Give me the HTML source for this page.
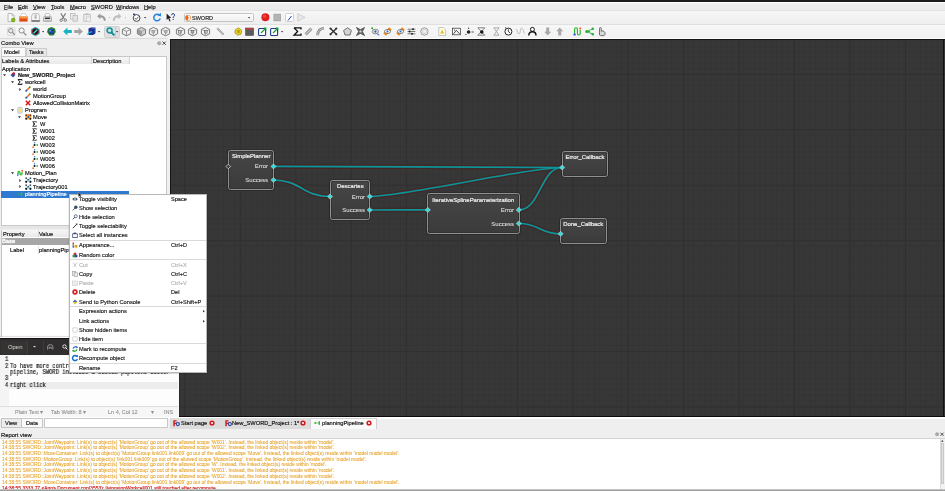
<!DOCTYPE html>
<html><head><meta charset="utf-8"><style>
*{margin:0;padding:0;box-sizing:border-box}
html,body{width:945px;height:491px;overflow:hidden;background:#efefef;font-family:"Liberation Sans",sans-serif;color:#111}
.t{-webkit-text-stroke:0.16px currentColor}
u{text-decoration-thickness:0.45px;text-underline-offset:0.1px;text-decoration-color:#555}
.a{position:absolute}
.t{position:absolute;white-space:nowrap;will-change:transform}
svg{position:absolute;overflow:visible}
</style></head><body>
<div class="a" style="left:0px;top:0px;width:945px;height:2px;background:#1c1c1c"></div>
<div class="a" style="left:0px;top:2px;width:945px;height:9px;background:linear-gradient(#fdfdfd 0,#fdfdfd 1.2px,#ededed 1.6px,#ebebeb 7.5px,#e4e4e4 8.5px)"></div>
<div class="t" style="left:4px;top:3.00px;font-size:5.7px;line-height:8px;"><u>F</u>ile</div>
<div class="t" style="left:18px;top:3.00px;font-size:5.7px;line-height:8px;"><u>E</u>dit</div>
<div class="t" style="left:33px;top:3.00px;font-size:5.7px;line-height:8px;"><u>V</u>iew</div>
<div class="t" style="left:51px;top:3.00px;font-size:5.7px;line-height:8px;"><u>T</u>ools</div>
<div class="t" style="left:70px;top:3.00px;font-size:5.7px;line-height:8px;"><u>M</u>acro</div>
<div class="t" style="left:91px;top:3.00px;font-size:5.7px;line-height:8px;"><u>S</u>WORD</div>
<div class="t" style="left:116px;top:3.00px;font-size:5.7px;line-height:8px;"><u>W</u>indows</div>
<div class="t" style="left:144px;top:3.00px;font-size:5.7px;line-height:8px;"><u>H</u>elp</div>
<div class="a" style="left:0px;top:11px;width:945px;height:13px;background:linear-gradient(#f6f6f6,#efefef)"></div>
<div class="a" style="left:0px;top:24px;width:945px;height:0.8px;background:#e0e0e0"></div>
<div class="a" style="left:0px;top:24.8px;width:945px;height:13px;background:linear-gradient(#f7f7f7,#f2f2f2)"></div>
<div class="a" style="left:0px;top:37.6px;width:945px;height:1.7px;background:#fefefe"></div>
<div class="t" style="left:1px;top:39.00px;font-size:5.8px;line-height:8px;">Combo View</div>
<svg style="left:156.8px;top:40.6px" width="10" height="5" viewBox="0 0 10 5"><circle cx="2.2" cy="2.2" r="1.8" fill="#a8a8a8" stroke="#999" stroke-width="0.4"/><path d="M5.6 0.6L8.8 3.8M8.8 0.6L5.6 3.8" stroke="#333" stroke-width="0.9"/></svg>
<div class="a" style="left:0px;top:38.2px;width:168px;height:0.6px;background:#dadada"></div>
<div class="a" style="left:0.5px;top:46.5px;width:25px;height:10.5px;background:#fafafa;border:1px solid #cdcdcd;border-bottom:none;border-radius:1px 1px 0 0"></div>
<div class="t" style="left:4px;top:48.00px;font-size:5.7px;line-height:8px;">Model</div>
<div class="a" style="left:25.5px;top:47.5px;width:21.5px;height:9.5px;background:#e8e8e8;border:1px solid #cdcdcd;border-bottom:none"></div>
<div class="t" style="left:29px;top:48.00px;font-size:5.7px;line-height:8px;">Tasks</div>
<div class="a" style="left:0.5px;top:56.3px;width:166.5px;height:170px;background:#fff;border:1px solid #c8c8c8"></div>
<div class="a" style="left:1.5px;top:57.3px;width:127.5px;height:7px;background:linear-gradient(#f7f7f7,#e9e9e9)"></div>
<div class="a" style="left:91px;top:57.3px;width:0.8px;height:7px;background:#d2d2d2"></div>
<div class="a" style="left:128.8px;top:57.3px;width:0.8px;height:7px;background:#d2d2d2"></div>
<div class="t" style="left:2px;top:57.00px;font-size:5.7px;line-height:8px;">Labels &amp; Attributes</div>
<div class="t" style="left:92.6px;top:57.00px;font-size:5.7px;line-height:8px;">Description</div>
<div class="a" style="left:1.4px;top:190.7px;width:127.3px;height:6.9px;background:#2f7ad0"></div>
<div class="t" style="left:2px;top:64.50px;font-size:5.7px;line-height:8px;">Application</div>
<svg style="left:3.0px;top:74.27px" width="3" height="2.4" viewBox="0 0 3 2.4"><path d="M0 0.3H3L1.5 2.2Z" fill="#333"/></svg>
<svg style="left:9.5px;top:72.47px" width="6" height="6" viewBox="0 0 6 6"><path d="M3 0.5 L5.5 3 L3 5.5 L0.5 3Z" fill="#3050a0"/><circle cx="3.8" cy="1.6" r="1.3" fill="#d02020"/></svg>
<div class="t" style="left:17.7px;top:71.47px;font-size:5.7px;line-height:8px;font-weight:bold;font-size:5.5px">New_SWORD_Project</div>
<svg style="left:10.5px;top:81.24px" width="3" height="2.4" viewBox="0 0 3 2.4"><path d="M0 0.3H3L1.5 2.2Z" fill="#333"/></svg>
<svg style="left:17.0px;top:79.44px" width="6" height="6" viewBox="0 0 6 6"><path d="M1 0.6H5V1.6M1 0.6L3.2 3L1 5.4H5V4.4" fill="none" stroke="#111" stroke-width="1"/></svg>
<div class="t" style="left:25.2px;top:78.44px;font-size:5.7px;line-height:8px;">workcell</div>
<svg style="left:18.5px;top:87.91px" width="2.4" height="3" viewBox="0 0 2.4 3"><path d="M0.3 0V3L2.2 1.5Z" fill="#333"/></svg>
<svg style="left:24.5px;top:86.41px" width="6" height="6" viewBox="0 0 6 6"><path d="M1 5 L5 1" stroke="#e8701a" stroke-width="1.6"/><circle cx="1.2" cy="4.8" r="1" fill="#2060d0"/><circle cx="4.8" cy="1.2" r="0.9" fill="#30a030"/></svg>
<div class="t" style="left:32.7px;top:85.41px;font-size:5.7px;line-height:8px;">world</div>
<svg style="left:24.5px;top:93.38px" width="6" height="6" viewBox="0 0 6 6"><path d="M1 5 L5 1" stroke="#e8701a" stroke-width="1.6"/><circle cx="1.2" cy="4.8" r="1" fill="#2060d0"/><circle cx="4.8" cy="1.2" r="0.9" fill="#30a030"/></svg>
<div class="t" style="left:32.7px;top:92.38px;font-size:5.7px;line-height:8px;">MotionGroup</div>
<svg style="left:24.5px;top:100.35px" width="6" height="6" viewBox="0 0 6 6"><path d="M0.8 0.8L5.2 5.2M5.2 0.8L0.8 5.2" stroke="#e01010" stroke-width="1.4"/></svg>
<div class="t" style="left:32.7px;top:99.35px;font-size:5.7px;line-height:8px;">AllowedCollisionMatrix</div>
<svg style="left:10.5px;top:109.11999999999999px" width="3" height="2.4" viewBox="0 0 3 2.4"><path d="M0 0.3H3L1.5 2.2Z" fill="#333"/></svg>
<svg style="left:17.0px;top:107.32px" width="6" height="6.5" viewBox="0 0 6 6.5"><rect x="0.8" y="0.4" width="4.4" height="5.8" rx="0.6" fill="#e8e8e8" stroke="#a8a8b8" stroke-width="0.6"/><rect x="1.7" y="1.4" width="2.6" height="3.8" fill="#f0e070"/></svg>
<div class="t" style="left:25.2px;top:106.32px;font-size:5.7px;line-height:8px;">Program</div>
<svg style="left:18.0px;top:116.08999999999999px" width="3" height="2.4" viewBox="0 0 3 2.4"><path d="M0 0.3H3L1.5 2.2Z" fill="#333"/></svg>
<svg style="left:24.5px;top:114.28999999999999px" width="6.5" height="6" viewBox="0 0 6.5 6"><rect x="0.3" y="0.5" width="6" height="5" fill="#f0b050"/><circle cx="1.2" cy="1.3" r="1" fill="#8a3a10"/><circle cx="5.4" cy="1.3" r="1" fill="#8a3a10"/><circle cx="1.2" cy="4.7" r="1" fill="#2a1a10"/><circle cx="5.4" cy="4.7" r="1" fill="#2a1a10"/><circle cx="3.3" cy="3" r="1" fill="#1a5a9a"/><rect x="2.4" y="0.3" width="1.8" height="1.2" fill="#e06a20"/></svg>
<div class="t" style="left:32.7px;top:113.29px;font-size:5.7px;line-height:8px;">Move</div>
<svg style="left:32.0px;top:121.25999999999999px" width="5" height="6" viewBox="0 0 5 6"><path d="M4.4 1.5V0.7H0.7L2.7 3L0.7 5.3H4.4V4.5" fill="none" stroke="#222" stroke-width="0.8"/><path d="M1.5 1.4L2.9 3L1.5 4.6Z" fill="#000"/></svg>
<div class="t" style="left:40.2px;top:120.26px;font-size:5.7px;line-height:8px;">W</div>
<svg style="left:32.0px;top:128.23px" width="5" height="6" viewBox="0 0 5 6"><path d="M4.4 1.5V0.7H0.7L2.7 3L0.7 5.3H4.4V4.5" fill="none" stroke="#222" stroke-width="0.8"/><path d="M1.5 1.4L2.9 3L1.5 4.6Z" fill="#000"/></svg>
<div class="t" style="left:40.2px;top:127.23px;font-size:5.7px;line-height:8px;">W001</div>
<svg style="left:32.0px;top:135.2px" width="5" height="6" viewBox="0 0 5 6"><path d="M4.4 1.5V0.7H0.7L2.7 3L0.7 5.3H4.4V4.5" fill="none" stroke="#222" stroke-width="0.8"/><path d="M1.5 1.4L2.9 3L1.5 4.6Z" fill="#000"/></svg>
<div class="t" style="left:40.2px;top:134.20px;font-size:5.7px;line-height:8px;">W002</div>
<svg style="left:32.0px;top:142.17000000000002px" width="6" height="6" viewBox="0 0 6 6"><rect x="1.9" y="0.2" width="1.3" height="1.2" fill="#2a70d8"/><circle cx="2.5" cy="3" r="1" fill="#111"/><circle cx="1.1" cy="5.2" r="0.9" fill="#f07818"/><path d="M3.8 3H5.9M5 2.2L5.9 3L5 3.8" fill="none" stroke="#30b030" stroke-width="0.8"/></svg>
<div class="t" style="left:40.2px;top:141.17px;font-size:5.7px;line-height:8px;">W003</div>
<svg style="left:32.0px;top:149.14px" width="6" height="6" viewBox="0 0 6 6"><rect x="1.9" y="0.2" width="1.3" height="1.2" fill="#2a70d8"/><circle cx="2.5" cy="3" r="1" fill="#111"/><circle cx="1.1" cy="5.2" r="0.9" fill="#f07818"/><path d="M3.8 3H5.9M5 2.2L5.9 3L5 3.8" fill="none" stroke="#30b030" stroke-width="0.8"/></svg>
<div class="t" style="left:40.2px;top:148.14px;font-size:5.7px;line-height:8px;">W004</div>
<svg style="left:32.0px;top:156.11px" width="6" height="6" viewBox="0 0 6 6"><rect x="1.9" y="0.2" width="1.3" height="1.2" fill="#2a70d8"/><circle cx="2.5" cy="3" r="1" fill="#111"/><circle cx="1.1" cy="5.2" r="0.9" fill="#f07818"/><path d="M3.8 3H5.9M5 2.2L5.9 3L5 3.8" fill="none" stroke="#30b030" stroke-width="0.8"/></svg>
<div class="t" style="left:40.2px;top:155.11px;font-size:5.7px;line-height:8px;">W005</div>
<svg style="left:32.0px;top:163.07999999999998px" width="6" height="6" viewBox="0 0 6 6"><rect x="1.9" y="0.2" width="1.3" height="1.2" fill="#2a70d8"/><circle cx="2.5" cy="3" r="1" fill="#111"/><circle cx="1.1" cy="5.2" r="0.9" fill="#f07818"/><path d="M3.8 3H5.9M5 2.2L5.9 3L5 3.8" fill="none" stroke="#30b030" stroke-width="0.8"/></svg>
<div class="t" style="left:40.2px;top:162.08px;font-size:5.7px;line-height:8px;">W006</div>
<svg style="left:10.5px;top:171.85000000000002px" width="3" height="2.4" viewBox="0 0 3 2.4"><path d="M0 0.3H3L1.5 2.2Z" fill="#333"/></svg>
<svg style="left:17.0px;top:170.05px" width="6" height="6" viewBox="0 0 6 6"><path d="M0.9 4.2Q0.9 1.2 2.3 1.6Q3.2 2 3 3.2Q2.8 4.6 3.8 4.8Q5.2 5 5 2.2" fill="none" stroke="#38c038" stroke-width="1.5"/><rect x="0" y="4.3" width="1.5" height="1.5" fill="#2a6ae0"/><rect x="4.4" y="0" width="1.6" height="1.6" fill="#f05a1a"/></svg>
<div class="t" style="left:25.2px;top:169.05px;font-size:5.7px;line-height:8px;">Motion_Plan</div>
<svg style="left:18.5px;top:178.51999999999998px" width="2.4" height="3" viewBox="0 0 2.4 3"><path d="M0.3 0V3L2.2 1.5Z" fill="#333"/></svg>
<svg style="left:24.5px;top:177.01999999999998px" width="6.5" height="6" viewBox="0 0 6.5 6"><rect x="0.3" y="0.5" width="6" height="5" fill="#e8f4f8"/><circle cx="1.2" cy="1.2" r="0.9" fill="#555"/><circle cx="5.4" cy="1.2" r="0.9" fill="#555"/><circle cx="1.2" cy="4.8" r="1.1" fill="#111"/><circle cx="5.4" cy="4.8" r="1.1" fill="#111"/><circle cx="3.3" cy="3" r="1.1" fill="#1a4a8a"/><circle cx="3.3" cy="3.8" r="0.7" fill="#60d8e8"/></svg>
<div class="t" style="left:32.7px;top:176.02px;font-size:5.7px;line-height:8px;">Trajectory</div>
<svg style="left:18.5px;top:185.49px" width="2.4" height="3" viewBox="0 0 2.4 3"><path d="M0.3 0V3L2.2 1.5Z" fill="#333"/></svg>
<svg style="left:24.5px;top:183.99px" width="6.5" height="6" viewBox="0 0 6.5 6"><rect x="0.3" y="0.5" width="6" height="5" fill="#e8f4f8"/><circle cx="1.2" cy="1.2" r="0.9" fill="#555"/><circle cx="5.4" cy="1.2" r="0.9" fill="#555"/><circle cx="1.2" cy="4.8" r="1.1" fill="#111"/><circle cx="5.4" cy="4.8" r="1.1" fill="#111"/><circle cx="3.3" cy="3" r="1.1" fill="#1a4a8a"/><circle cx="3.3" cy="3.8" r="0.7" fill="#60d8e8"/></svg>
<div class="t" style="left:32.7px;top:182.99px;font-size:5.7px;line-height:8px;">Trajectory001</div>
<svg style="left:17.0px;top:190.95999999999998px" width="6" height="6" viewBox="0 0 6 6"><circle cx="1.2" cy="3" r="0.8" fill="#30c030"/><path d="M2 3H4" stroke="#30c030" stroke-width="0.7"/><rect x="4" y="1" width="1.2" height="4" fill="#30c030"/></svg>
<div class="t" style="left:25.2px;top:189.96px;font-size:5.7px;line-height:8px;color:#fff">planningPipeline</div>
<div class="a" style="left:0px;top:226.3px;width:168px;height:3px;background:#e6e6e6"></div>
<div class="a" style="left:0.5px;top:229.5px;width:166.5px;height:110px;background:#fff;border:1px solid #c4c4c4"></div>
<div class="a" style="left:1.5px;top:230.3px;width:165px;height:7px;background:linear-gradient(#f6f6f6,#e9e9e9)"></div>
<div class="a" style="left:37.6px;top:230.3px;width:0.8px;height:7px;background:#d4d4d4"></div>
<div class="t" style="left:2.5px;top:230.00px;font-size:5.7px;line-height:8px;">Property</div>
<div class="t" style="left:39.4px;top:230.00px;font-size:5.7px;line-height:8px;">Value</div>
<div class="a" style="left:1.5px;top:237.6px;width:165px;height:7px;background:#a6a6a6"></div>
<div class="t" style="left:2.2px;top:237.40px;font-size:5.8px;line-height:8px;color:#fff;-webkit-text-stroke:0.3px #fff">Base</div>
<div class="a" style="left:1.5px;top:245.6px;width:165px;height:8px;background:#fff"></div>
<div class="a" style="left:37.6px;top:245.6px;width:0.8px;height:8px;background:#e4e4e4"></div>
<div class="t" style="left:10.2px;top:245.80px;font-size:5.7px;line-height:8px;">Label</div>
<div class="t" style="left:39.4px;top:245.80px;font-size:5.7px;line-height:8px;">planningPipeline</div>
<div class="a" style="left:169.5px;top:39.3px;width:775.5px;height:377.7px;background-color:#373737;background-image:linear-gradient(90deg,#2f2f2f 1px,transparent 1px),linear-gradient(#2f2f2f 1px,transparent 1px),linear-gradient(90deg,rgba(0,0,0,0.045) 1px,transparent 1px),linear-gradient(rgba(0,0,0,0.045) 1px,transparent 1px);background-size:55.44px 55.44px,55.44px 55.44px,5.544px 5.544px,5.544px 5.544px;background-position:13.4px 33.9px,13.4px 33.9px,13.4px 33.9px,13.4px 33.9px;border-top:1.5px solid #151515;border-left:1.2px solid #151515;border-bottom:1.4px solid #0c0c0c"></div>
<div class="a" style="left:942.8px;top:39.3px;width:1.2px;height:377.7px;background:#111"></div>
<svg style="left:0;top:0" width="945" height="491"><path d="M273.5 166.4 C308.5 166.4,527.2 167.5,562.2 167.5" fill="none" stroke="#4e2020" stroke-width="4.2"/><path d="M273.5 180.0 C301.75 180.0,301.75 196.5,330.0 196.5" fill="none" stroke="#4e2020" stroke-width="4.2"/><path d="M369.7 196.5 C404.7 196.5,527.2 167.5,562.2 167.5" fill="none" stroke="#4e2020" stroke-width="4.2"/><path d="M369.7 210.0 C398.75 210.0,398.75 209.9,427.8 209.9" fill="none" stroke="#4e2020" stroke-width="4.2"/><path d="M518.8 209.9 C540.5 209.9,540.5 167.5,562.2 167.5" fill="none" stroke="#4e2020" stroke-width="4.2"/><path d="M518.8 223.5 C539.7 223.5,539.7 233.8,560.6 233.8" fill="none" stroke="#4e2020" stroke-width="4.2"/><path d="M273.5 166.4 C308.5 166.4,527.2 167.5,562.2 167.5" fill="none" stroke="#333" stroke-width="2.9"/><path d="M273.5 180.0 C301.75 180.0,301.75 196.5,330.0 196.5" fill="none" stroke="#333" stroke-width="2.9"/><path d="M369.7 196.5 C404.7 196.5,527.2 167.5,562.2 167.5" fill="none" stroke="#333" stroke-width="2.9"/><path d="M369.7 210.0 C398.75 210.0,398.75 209.9,427.8 209.9" fill="none" stroke="#333" stroke-width="2.9"/><path d="M518.8 209.9 C540.5 209.9,540.5 167.5,562.2 167.5" fill="none" stroke="#333" stroke-width="2.9"/><path d="M518.8 223.5 C539.7 223.5,539.7 233.8,560.6 233.8" fill="none" stroke="#333" stroke-width="2.9"/><path d="M273.5 166.4 C308.5 166.4,527.2 167.5,562.2 167.5" fill="none" stroke="#0e9498" stroke-width="1.7"/><path d="M273.5 180.0 C301.75 180.0,301.75 196.5,330.0 196.5" fill="none" stroke="#0e9498" stroke-width="1.7"/><path d="M369.7 196.5 C404.7 196.5,527.2 167.5,562.2 167.5" fill="none" stroke="#0e9498" stroke-width="1.7"/><path d="M369.7 210.0 C398.75 210.0,398.75 209.9,427.8 209.9" fill="none" stroke="#0e9498" stroke-width="1.7"/><path d="M518.8 209.9 C540.5 209.9,540.5 167.5,562.2 167.5" fill="none" stroke="#0e9498" stroke-width="1.7"/><path d="M518.8 223.5 C539.7 223.5,539.7 233.8,560.6 233.8" fill="none" stroke="#0e9498" stroke-width="1.7"/></svg>
<div class="a" style="left:227.6px;top:149.6px;width:46.4px;height:40.7px;background:linear-gradient(#464646,#3b3b3b);border:1.2px solid #909090;border-radius:2.4px;box-shadow:0 0 0 0.6px #222, inset 0 0 0 0.6px #2a2a2a"></div>
<div class="t" style="left:227.6px;width:46.4px;text-align:center;top:151.79999999999998px;font-size:5.9px;line-height:8px;color:#f0f0f0;-webkit-text-stroke:0.2px currentColor">SimplePlanner</div>
<div class="t" style="left:208.3px;width:60px;text-align:right;top:162.4px;font-size:6px;line-height:8px;color:#dadada;-webkit-text-stroke:0.1px currentColor">Error</div>
<div class="t" style="left:208.3px;width:60px;text-align:right;top:176.0px;font-size:6px;line-height:8px;color:#dadada;-webkit-text-stroke:0.1px currentColor">Success</div>
<svg style="left:0;top:0" width="945" height="491"><path d="M228.3 164.2 L230.60000000000002 166.5 L228.3 168.8 L226.0 166.5Z" fill="#3a3a3a" stroke="#d8d8d8" stroke-width="0.8"/><path d="M273.5 163.8 L276.1 166.4 L273.5 169.0 L270.9 166.4Z" fill="#3ed8d8" stroke="#e6d6d6" stroke-width="0.45" stroke-linejoin="round"/><circle cx="273.5" cy="166.4" r="1.5" fill="#3ed8d8"/><path d="M273.5 177.4 L276.1 180.0 L273.5 182.6 L270.9 180.0Z" fill="#3ed8d8" stroke="#e6d6d6" stroke-width="0.45" stroke-linejoin="round"/><circle cx="273.5" cy="180.0" r="1.5" fill="#3ed8d8"/></svg>
<div class="a" style="left:329.5px;top:179.5px;width:40.7px;height:40.7px;background:linear-gradient(#464646,#3b3b3b);border:1.2px solid #909090;border-radius:2.4px;box-shadow:0 0 0 0.6px #222, inset 0 0 0 0.6px #2a2a2a"></div>
<div class="t" style="left:329.5px;width:40.7px;text-align:center;top:181.7px;font-size:5.9px;line-height:8px;color:#f0f0f0;-webkit-text-stroke:0.2px currentColor">Descartes</div>
<div class="t" style="left:304.5px;width:60px;text-align:right;top:192.5px;font-size:6px;line-height:8px;color:#dadada;-webkit-text-stroke:0.1px currentColor">Error</div>
<div class="t" style="left:304.5px;width:60px;text-align:right;top:206.0px;font-size:6px;line-height:8px;color:#dadada;-webkit-text-stroke:0.1px currentColor">Success</div>
<svg style="left:0;top:0" width="945" height="491"><path d="M330 193.9 L332.6 196.5 L330 199.1 L327.4 196.5Z" fill="#3ed8d8" stroke="#e6d6d6" stroke-width="0.45" stroke-linejoin="round"/><circle cx="330" cy="196.5" r="1.5" fill="#3ed8d8"/><path d="M369.7 193.9 L372.3 196.5 L369.7 199.1 L367.09999999999997 196.5Z" fill="#3ed8d8" stroke="#e6d6d6" stroke-width="0.45" stroke-linejoin="round"/><circle cx="369.7" cy="196.5" r="1.5" fill="#3ed8d8"/><path d="M369.7 207.4 L372.3 210.0 L369.7 212.6 L367.09999999999997 210.0Z" fill="#3ed8d8" stroke="#e6d6d6" stroke-width="0.45" stroke-linejoin="round"/><circle cx="369.7" cy="210.0" r="1.5" fill="#3ed8d8"/></svg>
<div class="a" style="left:427.2px;top:193.3px;width:92.5px;height:40.3px;background:linear-gradient(#464646,#3b3b3b);border:1.2px solid #909090;border-radius:2.4px;box-shadow:0 0 0 0.6px #222, inset 0 0 0 0.6px #2a2a2a"></div>
<div class="t" style="left:427.2px;width:92.5px;text-align:center;top:195.5px;font-size:5.9px;line-height:8px;color:#f0f0f0;-webkit-text-stroke:0.2px currentColor">IterativeSplineParameterization</div>
<div class="t" style="left:453.59999999999997px;width:60px;text-align:right;top:205.9px;font-size:6px;line-height:8px;color:#dadada;-webkit-text-stroke:0.1px currentColor">Error</div>
<div class="t" style="left:453.59999999999997px;width:60px;text-align:right;top:219.5px;font-size:6px;line-height:8px;color:#dadada;-webkit-text-stroke:0.1px currentColor">Success</div>
<svg style="left:0;top:0" width="945" height="491"><path d="M427.8 207.3 L430.40000000000003 209.9 L427.8 212.5 L425.2 209.9Z" fill="#3ed8d8" stroke="#e6d6d6" stroke-width="0.45" stroke-linejoin="round"/><circle cx="427.8" cy="209.9" r="1.5" fill="#3ed8d8"/><path d="M518.8 207.3 L521.4 209.9 L518.8 212.5 L516.1999999999999 209.9Z" fill="#3ed8d8" stroke="#e6d6d6" stroke-width="0.45" stroke-linejoin="round"/><circle cx="518.8" cy="209.9" r="1.5" fill="#3ed8d8"/><path d="M518.8 220.9 L521.4 223.5 L518.8 226.1 L516.1999999999999 223.5Z" fill="#3ed8d8" stroke="#e6d6d6" stroke-width="0.45" stroke-linejoin="round"/><circle cx="518.8" cy="223.5" r="1.5" fill="#3ed8d8"/></svg>
<div class="a" style="left:561.8px;top:150.7px;width:45.9px;height:26.3px;background:linear-gradient(#464646,#3b3b3b);border:1.2px solid #909090;border-radius:2.4px;box-shadow:0 0 0 0.6px #222, inset 0 0 0 0.6px #2a2a2a"></div>
<div class="t" style="left:561.8px;width:45.9px;text-align:center;top:152.89999999999998px;font-size:5.9px;line-height:8px;color:#f0f0f0;-webkit-text-stroke:0.2px currentColor">Error_Callback</div>
<svg style="left:0;top:0" width="945" height="491"><path d="M562.2 164.9 L564.8000000000001 167.5 L562.2 170.1 L559.6 167.5Z" fill="#3ed8d8" stroke="#e6d6d6" stroke-width="0.45" stroke-linejoin="round"/><circle cx="562.2" cy="167.5" r="1.5" fill="#3ed8d8"/></svg>
<div class="a" style="left:560px;top:217.5px;width:46.6px;height:26.2px;background:linear-gradient(#464646,#3b3b3b);border:1.2px solid #909090;border-radius:2.4px;box-shadow:0 0 0 0.6px #222, inset 0 0 0 0.6px #2a2a2a"></div>
<div class="t" style="left:560px;width:46.6px;text-align:center;top:219.7px;font-size:5.9px;line-height:8px;color:#f0f0f0;-webkit-text-stroke:0.2px currentColor">Done_Callback</div>
<svg style="left:0;top:0" width="945" height="491"><path d="M560.6 231.20000000000002 L563.2 233.8 L560.6 236.4 L558.0 233.8Z" fill="#3ed8d8" stroke="#e6d6d6" stroke-width="0.45" stroke-linejoin="round"/><circle cx="560.6" cy="233.8" r="1.5" fill="#3ed8d8"/></svg>
<div class="a" style="left:0px;top:337px;width:178.5px;height:80px;background:#fafafa;box-shadow:0 0 1.5px rgba(0,0,0,.45)"></div>
<div class="a" style="left:0px;top:338.4px;width:178.5px;height:17.1px;background:#302e2e;border-top:1px solid #151414"></div>
<div class="a" style="left:1px;top:340.5px;width:26.3px;height:13.5px;background:#363333;border-radius:1.5px 0 0 1.5px"></div>
<div class="t" style="left:8.4px;top:343.20px;font-size:5.9px;line-height:8px;color:#bcbcbc;-webkit-text-stroke:0.1px currentColor">Open</div>
<div class="a" style="left:27.3px;top:340.5px;width:0.6px;height:13.5px;background:#403d3d"></div>
<svg style="left:33.2px;top:346px" width="3" height="2" viewBox="0 0 3 2"><path d="M0 0H3L1.5 1.6Z" fill="#ddd"/></svg>
<div class="a" style="left:42.6px;top:340.5px;width:0.6px;height:13.5px;background:#403d3d"></div>
<svg style="left:46.6px;top:344.2px" width="6.5" height="6" viewBox="0 0 6.5 6"><path d="M0.6 5.6V3Q0.6 0.6 3.25 0.6Q5.9 0.6 5.9 3V5.6M2.2 5V3.4H4.3V5" fill="none" stroke="#b0b0b0" stroke-width="0.75"/></svg>
<svg style="left:62px;top:344px" width="6" height="6" viewBox="0 0 6 6"><circle cx="2.5" cy="2.5" r="1.7" fill="none" stroke="#eee" stroke-width="0.9"/><path d="M3.8 3.8L5.5 5.5" stroke="#eee" stroke-width="1"/></svg>
<div class="a" style="left:0px;top:355.5px;width:178px;height:51px;background:#fdfdfd"></div>
<div class="a" style="left:0px;top:355.5px;width:8.6px;height:51px;background:#f4f4f4"></div>
<div class="a" style="left:8.6px;top:382.4px;width:169px;height:6.6px;background:#ececec"></div>
<div class="t" style="left:4.6px;top:355.90px;font-size:6.4px;line-height:8px;font-family:Liberation Mono,monospace;transform:scaleX(0.85);transform-origin:0 0;-webkit-text-stroke:0.2px currentColor;color:#222">1</div>
<div class="t" style="left:4.6px;top:362.60px;font-size:6.4px;line-height:8px;font-family:Liberation Mono,monospace;transform:scaleX(0.85);transform-origin:0 0;-webkit-text-stroke:0.2px currentColor;color:#222">2</div>
<div class="t" style="left:4.6px;top:375.00px;font-size:6.4px;line-height:8px;font-family:Liberation Mono,monospace;transform:scaleX(0.85);transform-origin:0 0;-webkit-text-stroke:0.2px currentColor;color:#222">3</div>
<div class="t" style="left:4.6px;top:381.60px;font-size:6.4px;line-height:8px;font-family:Liberation Mono,monospace;transform:scaleX(0.85);transform-origin:0 0;-webkit-text-stroke:0.2px currentColor;color:#222">4</div>
<div class="t" style="left:9.6px;top:362.60px;font-size:6.4px;line-height:8px;font-family:Liberation Mono,monospace;transform:scaleX(0.85);transform-origin:0 0;-webkit-text-stroke:0.2px currentColor;color:#222">To have more control over your planning</div>
<div class="t" style="left:9.6px;top:368.90px;font-size:6.4px;line-height:8px;font-family:Liberation Mono,monospace;transform:scaleX(0.85);transform-origin:0 0;-webkit-text-stroke:0.2px currentColor;color:#222">pipeline, SWORD includes a custom pipeline editor</div>
<div class="t" style="left:9.6px;top:381.60px;font-size:6.4px;line-height:8px;font-family:Liberation Mono,monospace;transform:scaleX(0.85);transform-origin:0 0;-webkit-text-stroke:0.2px currentColor;color:#111">right click</div>
<div class="a" style="left:0px;top:406px;width:178px;height:0.7px;background:#dedede"></div>
<div class="a" style="left:0px;top:406.7px;width:178px;height:10.3px;background:#f6f6f6"></div>
<div class="t" style="left:15.2px;top:407.90px;font-size:5.5px;line-height:8px;color:#909090;-webkit-text-stroke:0.1px currentColor">Plain Text ▾</div>
<div class="t" style="left:51.4px;top:407.90px;font-size:5.5px;line-height:8px;color:#909090;-webkit-text-stroke:0.1px currentColor">Tab Width: 8 ▾</div>
<div class="t" style="left:107.6px;top:407.90px;font-size:5.5px;line-height:8px;color:#909090;-webkit-text-stroke:0.1px currentColor">Ln 4, Col 12</div>
<div class="t" style="left:150.5px;top:407.90px;font-size:5.5px;line-height:8px;color:#909090;-webkit-text-stroke:0.1px currentColor">▾</div>
<div class="t" style="left:163.8px;top:407.90px;font-size:5.5px;line-height:8px;color:#909090;-webkit-text-stroke:0.1px currentColor">INS</div>
<div class="a" style="left:68.5px;top:194px;width:138.6px;height:179px;background:#fff;border:1px solid #b8b8b8;box-shadow:0 0.5px 1.5px rgba(0,0,0,.35)"></div>
<div class="a" style="left:70px;top:240.3px;width:136px;height:0.7px;background:#dadada"></div>
<div class="a" style="left:70px;top:259.0px;width:136px;height:0.7px;background:#dadada"></div>
<div class="a" style="left:70px;top:305.9px;width:136px;height:0.7px;background:#dadada"></div>
<div class="a" style="left:70px;top:342.8px;width:136px;height:0.7px;background:#dadada"></div>
<div class="a" style="left:70px;top:362.6px;width:136px;height:0.7px;background:#dadada"></div>
<div class="t" style="left:79.4px;top:194.50px;font-size:5.7px;line-height:8px;color:#1a1a1a">Toggle visibility</div>
<div class="t" style="left:171px;top:194.50px;font-size:5.6px;line-height:8px;color:#1a1a1a">Space</div>
<svg style="left:72px;top:195.5px" width="6" height="6" viewBox="0 0 6 6"><ellipse cx="3" cy="3" rx="2.6" ry="1.6" fill="#4a5a70"/><circle cx="3" cy="3" r="0.8" fill="#fff"/></svg>
<div class="t" style="left:79.4px;top:204.00px;font-size:5.7px;line-height:8px;color:#1a1a1a">Show selection</div>
<svg style="left:72px;top:205px" width="6" height="6" viewBox="0 0 6 6"><circle cx="3.8" cy="2.2" r="1.7" fill="#3a4a70"/><path d="M3 3L0.8 5.4" stroke="#3a4a70" stroke-width="0.9"/></svg>
<div class="t" style="left:79.4px;top:213.00px;font-size:5.7px;line-height:8px;color:#1a1a1a">Hide selection</div>
<svg style="left:72px;top:214px" width="6" height="6" viewBox="0 0 6 6"><circle cx="3.8" cy="2.2" r="1.5" fill="none" stroke="#3a4a70" stroke-width="0.7"/><path d="M3 3L0.8 5.4" stroke="#3a4a70" stroke-width="0.9"/></svg>
<div class="t" style="left:79.4px;top:222.30px;font-size:5.7px;line-height:8px;color:#1a1a1a">Toggle selectability</div>
<svg style="left:72px;top:223.3px" width="6" height="6" viewBox="0 0 6 6"><path d="M0.8 5.2L4.8 1.2" stroke="#333" stroke-width="1"/><path d="M3.5 0.8L5.4 0.6L5.2 2.5Z" fill="#333"/></svg>
<div class="t" style="left:79.4px;top:231.20px;font-size:5.7px;line-height:8px;color:#1a1a1a">Select all instances</div>
<svg style="left:72px;top:232.2px" width="6" height="6" viewBox="0 0 6 6"><rect x="0.7" y="1.8" width="4.6" height="3.6" fill="none" stroke="#3a4a70" stroke-width="0.8"/><rect x="1.6" y="0.6" width="2.5" height="1.4" fill="#3a4a70"/></svg>
<div class="t" style="left:79.4px;top:241.40px;font-size:5.7px;line-height:8px;color:#1a1a1a">Appearance...</div>
<div class="t" style="left:171px;top:241.40px;font-size:5.6px;line-height:8px;color:#1a1a1a">Ctrl+D</div>
<svg style="left:72px;top:242.4px" width="6" height="6" viewBox="0 0 6 6"><rect x="0.5" y="0.5" width="1.5" height="1.5" fill="#e03030"/><rect x="0.5" y="2.3" width="1.5" height="1.5" fill="#30a030"/><rect x="0.5" y="4.1" width="1.5" height="1.5" fill="#3050d0"/><rect x="2.6" y="3" width="2.8" height="2.6" fill="#e0a020"/></svg>
<div class="t" style="left:79.4px;top:250.80px;font-size:5.7px;line-height:8px;color:#1a1a1a">Random color</div>
<svg style="left:72px;top:251.8px" width="6" height="6" viewBox="0 0 6 6"><circle cx="3" cy="1.9" r="1.5" fill="#d03030"/><circle cx="1.9" cy="3.9" r="1.5" fill="#30a030"/><circle cx="4.1" cy="3.9" r="1.5" fill="#4040c0"/></svg>
<div class="t" style="left:79.4px;top:261.00px;font-size:5.7px;line-height:8px;color:#b4b4b4">Cut</div>
<div class="t" style="left:171px;top:261.00px;font-size:5.6px;line-height:8px;color:#b4b4b4">Ctrl+X</div>
<svg style="left:72px;top:262px" width="6" height="6" viewBox="0 0 6 6"><path d="M1 0.5L4.5 5M5 0.5L1.5 5" stroke="#bbb" stroke-width="0.8"/></svg>
<div class="t" style="left:79.4px;top:269.80px;font-size:5.7px;line-height:8px;color:#1a1a1a">Copy</div>
<div class="t" style="left:171px;top:269.80px;font-size:5.6px;line-height:8px;color:#1a1a1a">Ctrl+C</div>
<svg style="left:72px;top:270.8px" width="6" height="6" viewBox="0 0 6 6"><rect x="0.6" y="0.6" width="3.2" height="3.8" fill="#eee" stroke="#999" stroke-width="0.6"/><rect x="2.2" y="1.8" width="3.2" height="3.8" fill="#eee" stroke="#999" stroke-width="0.6"/></svg>
<div class="t" style="left:79.4px;top:279.00px;font-size:5.7px;line-height:8px;color:#b4b4b4">Paste</div>
<div class="t" style="left:171px;top:279.00px;font-size:5.6px;line-height:8px;color:#b4b4b4">Ctrl+V</div>
<svg style="left:72px;top:280px" width="6" height="6" viewBox="0 0 6 6"><rect x="0.6" y="1" width="4.8" height="4.6" fill="#eee" stroke="#ccc" stroke-width="0.6"/></svg>
<div class="t" style="left:79.4px;top:288.40px;font-size:5.7px;line-height:8px;color:#1a1a1a">Delete</div>
<div class="t" style="left:171px;top:288.40px;font-size:5.6px;line-height:8px;color:#1a1a1a">Del</div>
<svg style="left:72px;top:289.4px" width="6" height="6" viewBox="0 0 6 6"><circle cx="3" cy="3" r="2.7" fill="#d01818"/><path d="M1.8 1.8L4.2 4.2M4.2 1.8L1.8 4.2" stroke="#fff" stroke-width="0.8"/></svg>
<div class="t" style="left:79.4px;top:297.80px;font-size:5.7px;line-height:8px;color:#1a1a1a">Send to Python Console</div>
<div class="t" style="left:171px;top:297.80px;font-size:5.6px;line-height:8px;color:#1a1a1a">Ctrl+Shift+P</div>
<svg style="left:72px;top:298.8px" width="6" height="6" viewBox="0 0 6 6"><path d="M3 0.6 L5.4 3 L3 3 Z" fill="#3a70b0"/><path d="M3 5.4 L0.6 3 L3 3Z" fill="#e8c030"/><path d="M0.6 3L3 0.6V3Z" fill="#3a70b0"/><path d="M5.4 3L3 5.4V3Z" fill="#e8c030"/></svg>
<div class="t" style="left:79.4px;top:307.40px;font-size:5.7px;line-height:8px;color:#1a1a1a">Expression actions</div>
<svg style="left:203px;top:310.09999999999997px" width="2" height="2.6" viewBox="0 0 2 2.6"><path d="M0 0V2.6L1.8 1.3Z" fill="#333"/></svg>
<div class="t" style="left:79.4px;top:316.80px;font-size:5.7px;line-height:8px;color:#1a1a1a">Link actions</div>
<svg style="left:203px;top:319.5px" width="2" height="2.6" viewBox="0 0 2 2.6"><path d="M0 0V2.6L1.8 1.3Z" fill="#333"/></svg>
<div class="t" style="left:79.4px;top:325.70px;font-size:5.7px;line-height:8px;color:#1a1a1a">Show hidden items</div>
<svg style="left:72px;top:326.7px" width="6" height="6" viewBox="0 0 6 6"><rect x="0.8" y="0.8" width="4.4" height="4.4" fill="#fff" stroke="#b8b8b8" stroke-width="0.6" rx="0.5"/></svg>
<div class="t" style="left:79.4px;top:334.60px;font-size:5.7px;line-height:8px;color:#1a1a1a">Hide item</div>
<svg style="left:72px;top:335.6px" width="6" height="6" viewBox="0 0 6 6"><rect x="0.8" y="0.8" width="4.4" height="4.4" fill="#fff" stroke="#b8b8b8" stroke-width="0.6" rx="0.5"/></svg>
<div class="t" style="left:79.4px;top:345.00px;font-size:5.7px;line-height:8px;color:#1a1a1a">Mark to recompute</div>
<svg style="left:72px;top:346px" width="6" height="6" viewBox="0 0 6 6"><path d="M1 2.6Q1.6 0.6 3.6 0.8L5.4 1.2" fill="none" stroke="#2a6ad0" stroke-width="1.2"/><path d="M5 3.4Q4.4 5.4 2.4 5.2L0.6 4.8" fill="none" stroke="#30a030" stroke-width="1.2"/><path d="M4.4 0L6 1.4L4.2 2.2Z" fill="#2a6ad0"/><path d="M1.6 3.8L0 4.6L1.8 6Z" fill="#30a030"/></svg>
<div class="t" style="left:79.4px;top:354.40px;font-size:5.7px;line-height:8px;color:#1a1a1a">Recompute object</div>
<svg style="left:72px;top:355.4px" width="6" height="6" viewBox="0 0 6 6"><path d="M4.9 1.4A2.5 2.5 0 1 0 5.4 4" fill="none" stroke="#1a70d0" stroke-width="1.5"/><path d="M3.4 1.8L6 2.2L5.6 -0.4Z" fill="#1a70d0"/></svg>
<div class="t" style="left:79.4px;top:364.00px;font-size:5.7px;line-height:8px;color:#1a1a1a">Rename</div>
<div class="t" style="left:171px;top:364.00px;font-size:5.6px;line-height:8px;color:#1a1a1a">F2</div>
<svg style="left:77.6px;top:192.2px" width="4" height="6" viewBox="0 0 4 6"><path d="M0.3 0.3L0.3 5L1.5 3.9L2.5 5.8L3.3 5.4L2.4 3.6L3.9 3.6Z" fill="#111" stroke="#fff" stroke-width="0.3"/></svg>
<div class="a" style="left:0px;top:417px;width:945px;height:12px;background:linear-gradient(#fff 0,#fff 1.8px,#efefef 2.2px)"></div>
<div class="a" style="left:0.8px;top:417.7px;width:21.6px;height:10.3px;background:#ececec;border:1px solid #c4c4c4"></div>
<div class="t" style="left:5px;top:419.00px;font-size:5.7px;line-height:8px;">View</div>
<div class="a" style="left:22.4px;top:417.7px;width:20.4px;height:10.3px;background:#fafafa;border:1px solid #c8c8c8;border-left:none"></div>
<div class="t" style="left:26px;top:419.00px;font-size:5.7px;line-height:8px;">Data</div>
<div class="a" style="left:43.8px;top:417.9px;width:124px;height:10px;background:#fff;border:1px solid #c8c8c8"></div>
<div class="a" style="left:170px;top:418px;width:140px;height:10.5px;background:#dcdcdc"></div>
<div class="a" style="left:310px;top:418px;width:66.7px;height:10.5px;background:#fafafa;border:1px solid #d0d0d0;border-bottom:none"></div>
<svg style="left:173px;top:419.8px" width="7" height="6.5" viewBox="0 0 7 6.5"><path d="M0.3 0.3H3.6V1.6H1.8V2.7H3.2V3.9H1.8V6.2H0.3Z" fill="#d81c1c"/><circle cx="4.8" cy="4.1" r="1.6" fill="none" stroke="#1e3e9a" stroke-width="1.1"/></svg>
<div class="t" style="left:180.6px;top:419.00px;font-size:5.7px;line-height:8px;">Start page</div>
<svg style="left:208.7px;top:420px" width="6" height="6" viewBox="0 0 6 6"><circle cx="3" cy="3" r="2.6" fill="#d01818"/><circle cx="3" cy="3" r="1.1" fill="#fff"/></svg>
<svg style="left:225px;top:419.8px" width="7" height="6.5" viewBox="0 0 7 6.5"><path d="M0.3 0.3H3.6V1.6H1.8V2.7H3.2V3.9H1.8V6.2H0.3Z" fill="#d81c1c"/><circle cx="4.8" cy="4.1" r="1.6" fill="none" stroke="#1e3e9a" stroke-width="1.1"/></svg>
<div class="t" style="left:232px;top:419.00px;font-size:5.7px;line-height:8px;">New_SWORD_Project : 1*</div>
<svg style="left:299.5px;top:420px" width="6" height="6" viewBox="0 0 6 6"><circle cx="3" cy="3" r="2.6" fill="#d01818"/><circle cx="3" cy="3" r="1.1" fill="#fff"/></svg>
<svg style="left:313.8px;top:420px" width="7" height="6" viewBox="0 0 7 6"><circle cx="1.2" cy="3" r="0.9" fill="#30b030"/><path d="M2 3H4.6" stroke="#30b030" stroke-width="0.7"/><rect x="4.6" y="1.2" width="1.4" height="3.6" fill="#30b030"/></svg>
<div class="t" style="left:322.4px;top:419.00px;font-size:5.7px;line-height:8px;">planningPipeline</div>
<svg style="left:366px;top:420px" width="6" height="6" viewBox="0 0 6 6"><circle cx="3" cy="3" r="2.6" fill="#d01818"/><circle cx="3" cy="3" r="1.1" fill="#fff"/></svg>
<div class="a" style="left:0px;top:429px;width:945px;height:9.3px;background:#efefef"></div>
<div class="t" style="left:1.3px;top:431.20px;font-size:5.8px;line-height:8px;">Report view</div>
<svg style="left:934.6px;top:431.9px" width="10" height="5" viewBox="0 0 10 5"><circle cx="2.1" cy="2.2" r="1.7" fill="#a8a8a8" stroke="#999" stroke-width="0.4"/><path d="M5.5 0.7L8.6 3.8M8.6 0.7L5.5 3.8" stroke="#333" stroke-width="0.85"/></svg>
<div class="a" style="left:0px;top:438.3px;width:945px;height:52.7px;background:#fff;border-top:1px solid #d4d4d4"></div>
<div class="a" style="left:939.6px;top:439px;width:5.4px;height:51px;background:#f3f3f3;border-left:0.6px solid #dcdcdc"></div>
<svg style="left:941px;top:440.2px" width="3" height="2" viewBox="0 0 3 2"><path d="M0 1.8H2.6L1.3 0Z" fill="#333"/></svg>
<div class="a" style="left:940.5px;top:442.6px;width:3.6px;height:41.2px;background:#e2e2e2;border:0.5px solid #c8c8c8"></div>
<div class="t" style="left:2px;top:438.80px;font-size:4.9px;line-height:8px;color:#e6a532;-webkit-text-stroke:0.08px currentColor">14:38:55  SWORD::JointWaypoint: Link(s) to object(s) &#39;MotionGroup&#39; go out of the allowed scope &#39;W001&#39;. Instead, the linked object(s) reside within &#39;model&#39;.</div>
<div class="t" style="left:2px;top:444.30px;font-size:4.9px;line-height:8px;color:#e6a532;-webkit-text-stroke:0.08px currentColor">14:38:55  SWORD::JointWaypoint: Link(s) to object(s) &#39;MotionGroup&#39; go out of the allowed scope &#39;W002&#39;. Instead, the linked object(s) reside within &#39;model&#39;.</div>
<div class="t" style="left:2px;top:449.90px;font-size:4.9px;line-height:8px;color:#e6a532;-webkit-text-stroke:0.08px currentColor">14:38:55  SWORD::MoveContainer: Link(s) to object(s) &#39;MotionGroup link001 link009&#39; go out of the allowed scope &#39;Move&#39;. Instead, the linked object(s) reside within &#39;model model model&#39;.</div>
<div class="t" style="left:2px;top:455.50px;font-size:4.9px;line-height:8px;color:#e6a532;-webkit-text-stroke:0.08px currentColor">14:38:55  SWORD::MotionGroup: Link(s) to object(s) &#39;link001 link009&#39; go out of the allowed scope &#39;MotionGroup&#39;. Instead, the linked object(s) reside within &#39;model model&#39;.</div>
<div class="t" style="left:2px;top:461.20px;font-size:4.9px;line-height:8px;color:#e6a532;-webkit-text-stroke:0.08px currentColor">14:38:55  SWORD::JointWaypoint: Link(s) to object(s) &#39;MotionGroup&#39; go out of the allowed scope &#39;W&#39;. Instead, the linked object(s) reside within &#39;model&#39;.</div>
<div class="t" style="left:2px;top:467.10px;font-size:4.9px;line-height:8px;color:#e6a532;-webkit-text-stroke:0.08px currentColor">14:38:55  SWORD::JointWaypoint: Link(s) to object(s) &#39;MotionGroup&#39; go out of the allowed scope &#39;W001&#39;. Instead, the linked object(s) reside within &#39;model&#39;.</div>
<div class="t" style="left:2px;top:473.00px;font-size:4.9px;line-height:8px;color:#e6a532;-webkit-text-stroke:0.08px currentColor">14:38:55  SWORD::JointWaypoint: Link(s) to object(s) &#39;MotionGroup&#39; go out of the allowed scope &#39;W002&#39;. Instead, the linked object(s) reside within &#39;model&#39;.</div>
<div class="t" style="left:2px;top:479.00px;font-size:4.9px;line-height:8px;color:#e6a532;-webkit-text-stroke:0.08px currentColor">14:38:55  SWORD::MoveContainer: Link(s) to object(s) &#39;MotionGroup link001 link009&#39; go out of the allowed scope &#39;Move&#39;. Instead, the linked object(s) reside within &#39;model model model&#39;.</div>
<div class="t" style="left:2px;top:484.60px;font-size:4.9px;line-height:8px;color:#d02020">14:38:55  3333.77 &lt;App&gt; Document.cpp(3553): livingstonWorkcell001 still touched after recompute</div>
<div class="a" style="left:0px;top:489.4px;width:945px;height:1.6px;background:linear-gradient(#d8d8d8,#8a8a8a)"></div>
<svg style="left:7px;top:13.3px" width="9" height="9" viewBox="0 0 9 9"><path d="M1 0.5H5L7.2 2.7V8.6H1Z" fill="#f8f8f8" stroke="#a0a0a0" stroke-width="0.7"/><path d="M5 0.5V2.7H7.2" fill="#ddd" stroke="#a0a0a0" stroke-width="0.5"/><circle cx="6.2" cy="6.9" r="2" fill="#80b818" stroke="#5a8a10" stroke-width="0.4"/></svg>
<svg style="left:19px;top:13.3px" width="9" height="9" viewBox="0 0 9 9"><path d="M1.5 4L2.5 0.6L6.5 0.6L8 3.5" fill="#fff" stroke="#aaa" stroke-width="0.5"/><path d="M0.3 3.6H8.6V8.6H0.3Z" fill="#e24a14"/><path d="M0.3 3.6H8.6V5.6H0.3Z" fill="#f39a3c"/></svg>
<svg style="left:30.8px;top:13.3px" width="9" height="9" viewBox="0 0 9 9"><path d="M0.6 8.4V3.2L1.8 0.6H7.4L8.6 3.2V8.4Z" fill="#f6f6f6" stroke="#a8a8a8" stroke-width="0.7"/><path d="M3.6 1.6V4.6H2.8L4.6 6.2L6.4 4.6H5.6V1.6Z" fill="#b8b8b8"/><rect x="0.5" y="7.2" width="8.2" height="1.5" fill="#6a6a6a"/></svg>
<svg style="left:43.2px;top:13.3px" width="9" height="9" viewBox="0 0 9 9"><path d="M2.2 3.6V1.6Q2.2 0.6 3.2 0.6H5.8Q6.8 0.6 6.8 1.6V3.6" fill="#fff" stroke="#999" stroke-width="0.6"/><path d="M0.5 8.4V4.6Q0.5 3.4 1.7 3.4H7.3Q8.5 3.4 8.5 4.6V8.4Z" fill="#e6e6e6" stroke="#8a8a8a" stroke-width="0.6"/><rect x="1.8" y="4.6" width="5.4" height="1.3" fill="#222"/><rect x="1.4" y="6.8" width="6.2" height="1.2" fill="#bbb"/></svg>
<svg style="left:58.8px;top:13.3px" width="9" height="9" viewBox="0 0 9 9"><path d="M1.8 0.4L5.4 6M6.6 0.4L3 6" stroke="#777" stroke-width="1.1"/><circle cx="2.2" cy="7.2" r="1.2" fill="none" stroke="#777" stroke-width="1"/><circle cx="6.3" cy="7.2" r="1.2" fill="none" stroke="#777" stroke-width="1"/></svg>
<svg style="left:70px;top:13.3px" width="9" height="9" viewBox="0 0 9 9"><rect x="0.5" y="0.5" width="4.6" height="5.6" fill="#eee" stroke="#aaa" stroke-width="0.6"/><rect x="3" y="2.6" width="4.6" height="5.6" fill="#e4e4e4" stroke="#aaa" stroke-width="0.6"/></svg>
<svg style="left:82.5px;top:13.3px" width="9" height="9" viewBox="0 0 9 9"><rect x="0.8" y="1.2" width="6.4" height="7" fill="#e8e8e8" stroke="#aaa" stroke-width="0.6"/><rect x="2.5" y="0.4" width="3" height="1.5" fill="#bbb"/><rect x="3.5" y="4" width="4" height="4.5" fill="#f0f0f0" stroke="#bbb" stroke-width="0.5"/></svg>
<svg style="left:97px;top:13.3px" width="9" height="9" viewBox="0 0 9 9"><path d="M7.8 7.8Q7.8 3.2 3.2 3.2H2" fill="none" stroke="#9a9a9a" stroke-width="2"/><path d="M0.2 3.2L3.4 0.2V6.2Z" fill="#9a9a9a"/></svg>
<svg style="left:113.3px;top:13.3px" width="9" height="9" viewBox="0 0 9 9"><path d="M0.8 7.8Q0.8 3.2 5.4 3.2H6.6" fill="none" stroke="#bdbdbd" stroke-width="2"/><path d="M8.4 3.2L5.2 0.2V6.2Z" fill="#bdbdbd"/></svg>
<div class="a" style="left:125px;top:17px;width:0.6px;height:1px;background:#bbb"></div>
<div class="a" style="left:109.3px;top:17px;width:0.6px;height:1px;background:#bbb"></div>
<svg style="left:132.4px;top:13.3px" width="9" height="9" viewBox="0 0 9 9"><circle cx="4.6" cy="5" r="3.4" fill="#fff" stroke="#333" stroke-width="0.9"/><path d="M2.8 5L4.2 6.4L6.6 3.6" fill="none" stroke="#333" stroke-width="0.8"/><rect x="1" y="0.6" width="2.2" height="1.4" fill="#2a4a90"/></svg>
<svg style="left:144.2px;top:17.2px" width="2.2" height="1.6" viewBox="0 0 2.2 1.6"><path d="M0 0H2.2L1.1 1.4Z" fill="#333"/></svg>
<svg style="left:152.5px;top:13.3px" width="9" height="9" viewBox="0 0 9 9"><path d="M6.6 2.4A3.3 3.3 0 1 0 7.2 5.6" fill="none" stroke="#2a82dc" stroke-width="1.5"/><path d="M4.4 2.6L8.2 3.4L7.8 -0.2Z" fill="#2a82dc"/></svg>
<svg style="left:166px;top:13.3px" width="9" height="9" viewBox="0 0 9 9"><path d="M0.6 0.6L0.6 7L2.2 5.6L3.6 8.4L4.6 7.9L3.3 5.1L5.3 5Z" fill="#222"/><path d="M5.5 2.2Q5.5 0.6 7 0.6Q8.6 0.6 8.6 2.2Q8.6 3.3 7.2 4V5" fill="none" stroke="#1a3a80" stroke-width="0.9"/><circle cx="7.2" cy="6.4" r="0.55" fill="#1a3a80"/></svg>
<div class="a" style="left:183.5px;top:12.5px;width:70px;height:9.8px;background:linear-gradient(#fcfcfc,#efefef);border:0.7px solid #c4c4c4;border-radius:1.5px"></div>
<svg style="left:185px;top:13.9px" width="7" height="8" viewBox="0 0 7 8"><circle cx="3" cy="3.8" r="2.8" fill="#e86a18"/><path d="M3 1.2Q5.3 1.2 5.3 3.8Q5.3 6.4 3 6.4" fill="#fff" opacity="0.9"/><path d="M2 2.5L4.2 3.8L2 5.1Z" fill="#e86a18"/></svg>
<div class="t" style="left:192px;top:13.50px;font-size:5.5px;line-height:8px;color:#222">SWORD</div>
<svg style="left:247.6px;top:16.7px" width="2.2" height="1.6" viewBox="0 0 2.2 1.6"><path d="M0 0H2.2L1.1 1.4Z" fill="#333"/></svg>
<svg style="left:260.6px;top:13.3px" width="9" height="9" viewBox="0 0 9 9"><circle cx="4.4" cy="4.3" r="4" fill="#e02020"/><circle cx="3.6" cy="3.2" r="1.6" fill="#ff6a6a" opacity="0.5"/></svg>
<svg style="left:273.3px;top:13.3px" width="9" height="9" viewBox="0 0 9 9"><rect x="0.5" y="0.8" width="7.4" height="7.4" fill="#a0a0a0"/><rect x="1.2" y="1.4" width="6" height="6" fill="#b4b4b4"/></svg>
<div class="a" style="left:285px;top:12.8px;width:9px;height:9px;background:#fff;border:0.6px solid #cfcfcf;border-radius:1.5px"></div>
<svg style="left:286.3px;top:13.700000000000001px" width="8" height="8" viewBox="0 0 8 8"><path d="M2 6.5L5.5 2" stroke="#1440c0" stroke-width="1"/></svg>
<svg style="left:297px;top:13.3px" width="9" height="9" viewBox="0 0 9 9"><path d="M0.8 0.6V8.2L8 4.4Z" fill="#e8e8e8" stroke="#bdbdbd" stroke-width="0.6"/></svg>
<svg style="left:7px;top:27.4px" width="9" height="9" viewBox="0 0 9 9"><rect x="0.5" y="0.5" width="7.5" height="8" rx="1.5" fill="none" stroke="#c8c8c8" stroke-width="0.6"/><circle cx="3.8" cy="3.8" r="2.2" fill="#e8e8e8" stroke="#888" stroke-width="1"/><path d="M5.4 5.4L7.8 7.8" stroke="#888" stroke-width="1.3"/></svg>
<svg style="left:18.4px;top:27.4px" width="9" height="9" viewBox="0 0 9 9"><circle cx="3.6" cy="3.5" r="2.6" fill="none" stroke="#8a8a8a" stroke-width="1"/><path d="M5.4 5.4L8.2 8.3" stroke="#8a8a8a" stroke-width="1.3"/></svg>
<svg style="left:30.8px;top:27.4px" width="9" height="9" viewBox="0 0 9 9"><path d="M4.4 -0.2L8.8 2.2V6.8L4.4 9.2L0 6.8V2.2Z" fill="#1fbcc8"/><circle cx="4.4" cy="4.5" r="3.1" fill="#161616" stroke="#a01818" stroke-width="0.9"/><path d="M2.6 6.2L6.2 2.8" stroke="#38dce6" stroke-width="1.4"/></svg>
<svg style="left:42.3px;top:31.2px" width="2.2" height="1.6" viewBox="0 0 2.2 1.6"><path d="M0 0H2.2L1.1 1.4Z" fill="#333"/></svg>
<svg style="left:47.3px;top:27.4px" width="9" height="9" viewBox="0 0 9 9"><path d="M1 1.5L4.4 0L8 1.5L8.8 5L6.5 8.5L2.5 8.5L0 5Z" fill="#1e8a2a"/><circle cx="4.4" cy="4.6" r="2.8" fill="#2a46c8"/><path d="M1.5 3Q4.4 4.5 7.5 3M2 6.5Q4.4 5 7 6.8" stroke="#123a12" stroke-width="0.7" fill="none"/><circle cx="3.2" cy="3.8" r="0.8" fill="#aab8ff"/></svg>
<svg style="left:62.6px;top:27.4px" width="9" height="9" viewBox="0 0 9 9"><path d="M0.2 4.5L4.4 0.4V3H8.8V6H4.4V8.6Z" fill="#14b4c4"/></svg>
<svg style="left:74px;top:27.4px" width="9" height="9" viewBox="0 0 9 9"><path d="M8.8 4.5L4.6 0.4V3H0.2V6H4.6V8.6Z" fill="#a4a4a4"/></svg>
<svg style="left:86.8px;top:27.4px" width="9" height="9" viewBox="0 0 9 9"><path d="M1.5 1.5L4 0.5H8.4V6.5L6 8H1.5Z" fill="#1c2e90"/><path d="M4.5 1.5H8V6" fill="none" stroke="#3a6ad0" stroke-width="0.7"/><path d="M0.4 7.6Q2.4 4.4 5 5" stroke="#18c0c8" stroke-width="1.3" fill="none"/></svg>
<svg style="left:98.4px;top:31.2px" width="2.2" height="1.6" viewBox="0 0 2.2 1.6"><path d="M0 0H2.2L1.1 1.4Z" fill="#333"/></svg>
<div class="a" style="left:103.8px;top:25.8px;width:16.5px;height:12px;background:#e0e0e0;border:0.6px solid #d0d0d0;border-radius:1.5px"></div>
<div class="a" style="left:115.2px;top:26.5px;width:0.6px;height:10.6px;background:#c8c8c8"></div>
<svg style="left:105.5px;top:27.4px" width="9" height="9" viewBox="0 0 9 9"><circle cx="3.6" cy="3.4" r="2.5" fill="#bfe8ea" stroke="#0c9098" stroke-width="1.5"/><path d="M5.3 5.2L8.4 8.4" stroke="#0c9098" stroke-width="2"/></svg>
<svg style="left:116.3px;top:31.2px" width="2.2" height="1.6" viewBox="0 0 2.2 1.6"><path d="M0 0H2.2L1.1 1.4Z" fill="#333"/></svg>
<svg style="left:122px;top:27.4px" width="9" height="9" viewBox="0 0 9 9"><path d="M4.5 0.4L8.6 2.4V6.8L4.5 8.8L0.4 6.8V2.4Z" fill="#f2f2f2" stroke="#6e6e6e" stroke-width="0.9"/><path d="M0.6 2.4L4.5 4.4L8.4 2.4M4.5 4.4V8.6" fill="none" stroke="#777" stroke-width="0.8"/></svg>
<svg style="left:136.8px;top:27.4px" width="9" height="9" viewBox="0 0 9 9"><path d="M4.5 0.4L8.6 2.4V6.8L4.5 8.8L0.4 6.8V2.4Z" fill="#cfcfcf" stroke="#6e6e6e" stroke-width="0.9"/><path d="M0.8 2.6L4.5 4.4L8.2 2.6M4.5 4.4V8.4" fill="none" stroke="#888" stroke-width="0.6"/><path d="M0.9 2.8L4.3 4.5V8.3L0.9 6.6Z" fill="#9a9a9a"/></svg>
<svg style="left:148.9px;top:27.4px" width="9" height="9" viewBox="0 0 9 9"><path d="M4.5 0.4L8.6 2.4V6.8L4.5 8.8L0.4 6.8V2.4Z" fill="#f2f2f2" stroke="#6e6e6e" stroke-width="0.9"/><path d="M0.8 2.6L4.5 4.4L8.2 2.6M4.5 4.4V8.4" fill="none" stroke="#888" stroke-width="0.6"/><circle cx="4.2" cy="4.8" r="1.4" fill="none" stroke="#666" stroke-width="0.6"/></svg>
<svg style="left:161px;top:27.4px" width="9" height="9" viewBox="0 0 9 9"><path d="M4.5 0.4L8.6 2.4V6.8L4.5 8.8L0.4 6.8V2.4Z" fill="#f2f2f2" stroke="#6e6e6e" stroke-width="0.9"/><path d="M0.8 2.6L4.5 4.4L8.2 2.6M4.5 4.4V8.4" fill="none" stroke="#888" stroke-width="0.6"/><circle cx="4.8" cy="4.8" r="1.4" fill="none" stroke="#666" stroke-width="0.6"/></svg>
<svg style="left:176px;top:27.4px" width="9" height="9" viewBox="0 0 9 9"><path d="M4.5 0.4L8.6 2.4V6.8L4.5 8.8L0.4 6.8V2.4Z" fill="#f2f2f2" stroke="#6e6e6e" stroke-width="0.9"/><path d="M0.8 2.6L4.5 4.4L8.2 2.6M4.5 4.4V8.4" fill="none" stroke="#888" stroke-width="0.6"/><rect x="2.6" y="3.3" width="2.6" height="2.8" fill="none" stroke="#555" stroke-width="0.6"/></svg>
<svg style="left:188px;top:27.4px" width="9" height="9" viewBox="0 0 9 9"><path d="M4.5 0.4L8.6 2.4V6.8L4.5 8.8L0.4 6.8V2.4Z" fill="#f2f2f2" stroke="#6e6e6e" stroke-width="0.9"/><path d="M0.8 2.6L4.5 4.4L8.2 2.6M4.5 4.4V8.4" fill="none" stroke="#888" stroke-width="0.6"/><rect x="3.2" y="3.4" width="2.6" height="2.6" fill="none" stroke="#555" stroke-width="0.6"/></svg>
<svg style="left:201px;top:27.4px" width="9" height="9" viewBox="0 0 9 9"><path d="M4.5 0.4L8.6 2.4V6.8L4.5 8.8L0.4 6.8V2.4Z" fill="#f2f2f2" stroke="#6e6e6e" stroke-width="0.9"/><path d="M0.8 2.6L4.5 4.4L8.2 2.6M4.5 4.4V8.4" fill="none" stroke="#888" stroke-width="0.6"/><rect x="3.6" y="3.3" width="2.6" height="2.8" fill="none" stroke="#555" stroke-width="0.6"/></svg>
<svg style="left:215.5px;top:27.4px" width="9" height="9" viewBox="0 0 9 9"><path d="M1.2 1.2L7.6 7.6" stroke="#9a9a9a" stroke-width="2"/><path d="M1.2 1.2L7.6 7.6" stroke="#d0d0d0" stroke-width="0.8"/></svg>
<svg style="left:234px;top:27.4px" width="9" height="9" viewBox="0 0 9 9"><path d="M1 3L4.5 0.8L7.8 3.4L7 7.2L3.6 8.2L1 6.2Z" fill="#e8d020" stroke="#8a7a10" stroke-width="0.6"/><path d="M3 3.5L5.5 3L5.8 5.8L3.6 6.2Z" fill="#b09810"/></svg>
<svg style="left:245.4px;top:27.4px" width="9" height="9" viewBox="0 0 9 9"><rect x="0.6" y="1" width="8" height="7.4" fill="#5a5a5a" stroke="#333" stroke-width="0.5"/><rect x="0.6" y="1" width="8" height="1.6" fill="#c04040"/></svg>
<svg style="left:258px;top:27.4px" width="9" height="9" viewBox="0 0 9 9"><rect x="0.6" y="1.5" width="7" height="7" fill="#fff" stroke="#1a3a8a" stroke-width="1.1" rx="1"/><path d="M3 6L7.5 1.5" stroke="#18a030" stroke-width="1.3"/><path d="M5.5 0.6H8.4V3.4Z" fill="#18a030"/></svg>
<svg style="left:270px;top:27.4px" width="9" height="9" viewBox="0 0 9 9"><rect x="0.6" y="1.5" width="7" height="7" fill="#fff" stroke="#1a3a8a" stroke-width="1.1" rx="1"/><path d="M3 6L7.5 1.5" stroke="#18a030" stroke-width="1.3"/><path d="M5.5 0.6H8.4V3.4Z" fill="#18a030"/></svg>
<svg style="left:281.2px;top:31.2px" width="2.2" height="1.6" viewBox="0 0 2.2 1.6"><path d="M0 0H2.2L1.1 1.4Z" fill="#333"/></svg>
<svg style="left:292.6px;top:27.4px" width="9" height="9" viewBox="0 0 9 9"><path d="M1 0.8H8V2.4M1 0.8L4.6 4.4L1 8.2H8V6.6" fill="none" stroke="#111" stroke-width="1.3"/></svg>
<svg style="left:304px;top:27.4px" width="9" height="9" viewBox="0 0 9 9"><path d="M1.6 7.4L7.4 1.6" stroke="#8e8e8e" stroke-width="3"/><path d="M1.6 7.4L7.4 1.6" stroke="#cfcfcf" stroke-width="1.2"/></svg>
<svg style="left:316px;top:27.4px" width="9" height="9" viewBox="0 0 9 9"><path d="M1.6 8.2Q1.8 2 8 1.2" fill="none" stroke="#8e8e8e" stroke-width="2.8"/><path d="M1.6 8.2Q1.8 2 8 1.2" fill="none" stroke="#c8c8c8" stroke-width="1"/></svg>
<svg style="left:328.8px;top:27.4px" width="9" height="9" viewBox="0 0 9 9"><path d="M1.2 1.2L7.6 7.6M7.6 1.2L1.2 7.6" stroke="#333" stroke-width="1.4"/><circle cx="1.5" cy="1.5" r="1.1" fill="#333"/><circle cx="7.3" cy="1.5" r="1.1" fill="#333"/><circle cx="1.5" cy="7.3" r="1.1" fill="#333"/><circle cx="7.3" cy="7.3" r="1.1" fill="#333"/></svg>
<svg style="left:343.4px;top:27.4px" width="9" height="9" viewBox="0 0 9 9"><path d="M4.5 0.7L8.4 3.5L7 8H2L0.6 3.5Z" fill="#d4d4d4" stroke="#444" stroke-width="0.7"/></svg>
<svg style="left:355.5px;top:27.4px" width="9" height="9" viewBox="0 0 9 9"><path d="M0.4 0.4L4.5 2.6L8.6 0.4L6.4 4.5L8.6 8.6L4.5 6.4L0.4 8.6L2.6 4.5Z" fill="#6a6a6a" stroke="#333" stroke-width="0.6"/><circle cx="4.5" cy="4.5" r="1.1" fill="#ddd"/></svg>
<svg style="left:370.7px;top:27.4px" width="9" height="9" viewBox="0 0 9 9"><ellipse cx="4.4" cy="4.6" rx="3.2" ry="2.3" fill="#ddd" stroke="#555" stroke-width="0.6"/><circle cx="4.4" cy="4.6" r="1.1" fill="#2060c0"/><circle cx="1.2" cy="1.2" r="1" fill="#20a020"/><path d="M6.5 7.2L8.2 8" stroke="#1a70e0" stroke-width="1.1"/></svg>
<svg style="left:383.4px;top:27.4px" width="9" height="9" viewBox="0 0 9 9"><path d="M0.2 6.2L6.2 0.2L8.8 2.8L2.8 8.8Z" fill="#f08a18"/><ellipse cx="4.5" cy="4.5" rx="3" ry="2" fill="#fff" stroke="#333" stroke-width="0.6"/><circle cx="4.5" cy="4.5" r="1.1" fill="#2a6ad0"/></svg>
<svg style="left:395.5px;top:27.4px" width="9" height="9" viewBox="0 0 9 9"><path d="M0.2 6.2L6.2 0.2L8.8 2.8L2.8 8.8Z" fill="#f08a18"/><ellipse cx="4.5" cy="4.5" rx="3" ry="2" fill="#fff" stroke="#333" stroke-width="0.6"/><circle cx="4.5" cy="4.5" r="1.1" fill="#2a6ad0"/></svg>
<svg style="left:407px;top:27.4px" width="9" height="9" viewBox="0 0 9 9"><path d="M0.6 2.2H8.4M0.6 4.5H8.4M0.6 6.8H8.4" stroke="#444" stroke-width="0.7"/><rect x="5.2" y="1.3" width="1.6" height="1.8" fill="#222"/><rect x="1.8" y="3.6" width="1.6" height="1.8" fill="#222"/><rect x="4.2" y="5.9" width="1.6" height="1.8" fill="#222"/></svg>
<svg style="left:419.7px;top:27.4px" width="9" height="9" viewBox="0 0 9 9"><circle cx="4.4" cy="4.5" r="3.7" fill="#f2f2f2" stroke="#777" stroke-width="0.7"/><circle cx="4.4" cy="4.5" r="2" fill="none" stroke="#aaa" stroke-width="0.5"/></svg>
<svg style="left:438px;top:27.4px" width="9" height="9" viewBox="0 0 9 9"><path d="M0.8 0.5H5.5L7.6 2.6V8.5H0.8Z" fill="#fafae8" stroke="#999" stroke-width="0.5"/><path d="M2.2 6.5L4.2 2.5L6.2 6.5Z" fill="#e8c020"/></svg>
<svg style="left:452px;top:27.4px" width="9" height="9" viewBox="0 0 9 9"><rect x="0.6" y="1.2" width="8" height="6.6" fill="#f4f4f4" stroke="#333" stroke-width="0.7"/><path d="M1.5 6.8L4.4 3.4L7.6 6.8" fill="none" stroke="#222" stroke-width="0.8"/><circle cx="2.6" cy="3" r="0.6" fill="#222"/></svg>
<svg style="left:464.8px;top:27.4px" width="9" height="9" viewBox="0 0 9 9"><circle cx="3.6" cy="5" r="1.8" fill="#222"/><path d="M6.2 5H8.4M7.4 3.9L8.4 5L7.4 6.1" fill="none" stroke="#555" stroke-width="0.6"/><circle cx="3.6" cy="1.2" r="0.7" fill="#444"/><circle cx="0.9" cy="7.4" r="0.6" fill="#444"/></svg>
<svg style="left:476.8px;top:27.4px" width="9" height="9" viewBox="0 0 9 9"><path d="M0.8 0.8H7.8L4.3 4.5L7.8 8.2H0.8L4.3 4.5Z" fill="none" stroke="#555" stroke-width="0.7"/><circle cx="4.8" cy="5" r="1.7" fill="#111"/></svg>
<svg style="left:492.7px;top:27.4px" width="9" height="9" viewBox="0 0 9 9"><path d="M0.8 0.8H6L3.4 4.5L6 8.2H0.8L3.4 4.5Z" fill="none" stroke="#9a9a9a" stroke-width="0.8"/></svg>
<svg style="left:503.5px;top:27.4px" width="9" height="9" viewBox="0 0 9 9"><circle cx="4.4" cy="4.6" r="3.5" fill="#fff" stroke="#222" stroke-width="1"/><path d="M4.4 2.4V4.6L6 5.8" fill="none" stroke="#222" stroke-width="0.9"/><path d="M1 1.2L2.2 0.5" stroke="#222" stroke-width="0.8"/></svg>
<svg style="left:515.8px;top:27.4px" width="9" height="9" viewBox="0 0 9 9"><path d="M0.6 2Q1.6 7 2.8 7Q4.4 7 4.4 3.5Q4.4 1 5.6 1Q7.2 1 8.2 6.5" fill="none" stroke="#b8b8b8" stroke-width="0.9"/></svg>
<svg style="left:527.9px;top:27.4px" width="9" height="9" viewBox="0 0 9 9"><circle cx="4.4" cy="2.4" r="2" fill="#fff" stroke="#111" stroke-width="1"/><path d="M0.8 8.4Q0.8 4.8 4.4 4.8Q8 4.8 8 8.4" fill="none" stroke="#111" stroke-width="1.4"/></svg>
<svg style="left:543.7px;top:27.4px" width="8" height="9" viewBox="0 0 8 9"><path d="M2.2 0.5H5.2V4.8H7.2L3.7 8.5L0.2 4.8H2.2Z" fill="#a8a8a8"/></svg>
<svg style="left:555.8px;top:27.4px" width="8" height="9" viewBox="0 0 8 9"><path d="M2.2 8.5H5.2V4.2H7.2L3.7 0.5L0.2 4.2H2.2Z" fill="#a8a8a8"/></svg>
<svg style="left:573px;top:27.4px" width="9" height="9" viewBox="0 0 9 9"><path d="M1.6 6.2V2.2Q1.6 0.8 3 0.8Q4.4 0.8 4.4 2.2V6.6Q4.4 8 5.8 8Q7.2 8 7.2 6.6V3" fill="none" stroke="#20b020" stroke-width="1.1"/><circle cx="1.6" cy="7.4" r="1.2" fill="#2060e0"/><rect x="6.3" y="0.6" width="1.8" height="1.8" fill="#f05a20"/></svg>
<svg style="left:585px;top:27.4px" width="10" height="9" viewBox="0 0 10 9"><circle cx="1.8" cy="4.5" r="1.5" fill="#20b030"/><circle cx="7.8" cy="1.8" r="1.2" fill="#20b030"/><circle cx="7.8" cy="7.2" r="1.2" fill="#20b030"/><path d="M1.8 4.5L7.8 1.8M1.8 4.5L7.8 7.2M1.8 4.5H5" stroke="#20b030" stroke-width="0.9"/></svg>
<svg style="left:598.3px;top:27.4px" width="8" height="9" viewBox="0 0 8 9"><path d="M1.5 8V1.5Q1.5 0.5 2.4 0.5Q3.3 0.5 3.3 1.5V4.2Q4.6 3.4 6 4.4Q7.6 5.4 7 7.4L6.2 8.6H2.5Z" fill="#d8d8d8" stroke="#555" stroke-width="0.8"/></svg>
</body></html>
